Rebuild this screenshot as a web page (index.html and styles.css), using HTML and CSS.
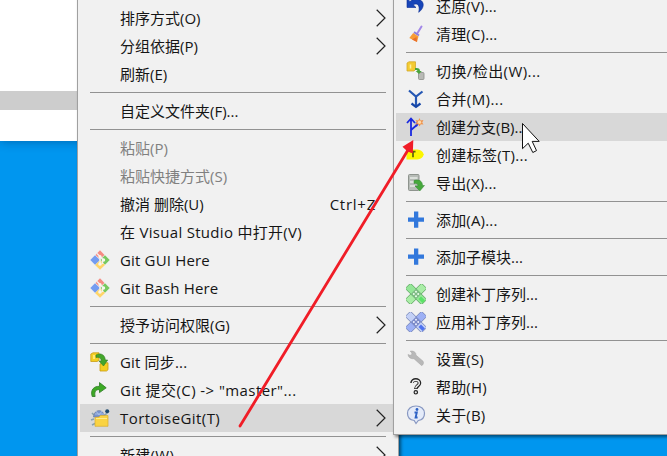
FILE: index.html
```html
<!DOCTYPE html>
<html lang="zh-CN">
<head>
<meta charset="utf-8">
<title>TortoiseGit</title>
<link rel="stylesheet" href="styles.css">
</head>
<body>
<main class="desktop">
  <div class="window"><div class="scrollbar"></div></div>

  <nav class="menu context">
    <div class="item more"><svg class="chev" viewBox="0 0 10 18"><path d="M.7.8 9 9 .7 17.2"/></svg></div>
    <div class="item more">排序方式(O)<svg class="chev" viewBox="0 0 10 18"><path d="M.7.8 9 9 .7 17.2"/></svg></div>
    <div class="item more">分组依据(P)<svg class="chev" viewBox="0 0 10 18"><path d="M.7.8 9 9 .7 17.2"/></svg></div>
    <div class="item">刷新(E)</div>
    <div class="sep"></div>
    <div class="item">自定义文件夹(F)...</div>
    <div class="sep"></div>
    <div class="item off">粘贴(P)</div>
    <div class="item off">粘贴快捷方式(S)</div>
    <div class="item">撤消 删除(U)<span class="key">Ctrl+Z</span></div>
    <div class="item loose">在 Visual Studio 中打开(V)</div>
    <div class="item slight">
      <svg class="icon" viewBox="0 0 20 20"><path fill="#f58b83" d="M10 .3 14.5 5 10 9 5.500 5z"/><path fill="#77c95f" d="M15 5.300 19.700 10 15 14.700 10 10z"/><path fill="#ffd568" d="M10 10 15 15 10 19.700 5 15z"/><path fill="#749cf0" d="M5 5.300 10 10 5 14.700.3 10z"/><path d="M7 3.500 12.500 9v5M10 7v7" fill="none" stroke="#f1f1ee" stroke-width="1.400"/><g fill="#f6f6ef"><circle cx="10" cy="6.700" r="1.600"/><circle cx="10" cy="14" r="1.800"/><circle cx="13.500" cy="10" r="1.700"/></g></svg>
      Git GUI Here</div>
    <div class="item slight">
      <svg class="icon" viewBox="0 0 20 20"><path fill="#f58b83" d="M10 .3 14.500 5 10 9 5.500 5z"/><path fill="#77c95f" d="M15 5.300 19.700 10 15 14.700 10 10z"/><path fill="#ffd568" d="M10 10 15 15 10 19.700 5 15z"/><path fill="#749cf0" d="M5 5.300 10 10 5 14.700.3 10z"/><path d="M7 3.500 12.500 9v5M10 7v7" fill="none" stroke="#f1f1ee" stroke-width="1.400"/><g fill="#f6f6ef"><circle cx="10" cy="6.700" r="1.600"/><circle cx="10" cy="14" r="1.800"/><circle cx="13.500" cy="10" r="1.700"/></g></svg>
      Git Bash Here</div>
    <div class="sep"></div>
    <div class="item more">授予访问权限(G)<svg class="chev" viewBox="0 0 10 18"><path d="M.7.8 9 9 .7 17.2"/></svg></div>
    <div class="sep"></div>
    <div class="item slight">
      <svg class="icon" viewBox="0 0 20 20"><g fill="#f3cf21" stroke="#c99d16" stroke-width=".8"><path d="M.8 2 3 .8h6v7.600L7 9.500H.8z"/><path d="M10 12l2-1.200h6v7L16.500 19H10z"/></g><path d="M3 3h2v4H3z" fill="#ffe875"/><path fill="#43a62b" stroke="#2f7b21" stroke-width=".6" d="M6 3c4.500-2.500 9-.5 9.300 5h2.400L13.500 14 9 9h2.300C11.200 6 9 4.700 6 5.500z"/></svg>
      Git 同步...</div>
    <div class="item wide">
      <svg class="icon" viewBox="0 0 20 20"><path fill="#3caa24" stroke="#36812d" stroke-width=".9" d="M2.200 16.500C.2 9.500 4 6.300 9.500 6.300V2.600l6.700 5.200L9.500 12.600V9.700c-3.500-.4-5.500 1.400-4.400 6.800z"/></svg>
      Git 提交(C) -&gt; "master"...</div>
    <div class="item more on wide">
      <svg class="icon" viewBox="0 0 20 20"><path d="M2 5l2 2M1 12l3-1M2 17l4-2M14 8l4-4" stroke="#88a2ae" stroke-width="1.600"/><path d="M3.500 9C4 .5 14 .5 14.500 9z" fill="#7893cf" stroke="#6b7d9e" stroke-width=".7"/><path d="M6 3l3 4 3-4M5 6h9" fill="none" stroke="#b3c6e8" stroke-width=".8"/><circle cx="17.200" cy="3.200" r="2" fill="#1d496f"/><path d="M5 9.500 9 9l1.500-1.500H18v10.800H5z" fill="#fad342" stroke="#d7ad2e" stroke-width=".7"/><path d="M6 10.500h11" stroke="#ffec8b"/></svg>
      TortoiseGit(T)<svg class="chev" viewBox="0 0 10 18"><path d="M.7.8 9 9 .7 17.2"/></svg></div>
    <div class="sep"></div>
    <div class="item more loose">新建(W)<svg class="chev" viewBox="0 0 10 18"><path d="M.7.8 9 9 .7 17.2"/></svg></div>
  </nav>

  <nav class="menu sub">
    <div class="item slight">
      <svg class="icon" viewBox="0 0 20 20"><path fill="#1745b8" stroke="#0b2d93" stroke-width=".6" d="M1 2.500v9h9L7.200 8.800c4-2.400 7.200.2 5.500 7.500 5.800-4 6-10.800.8-12.500C10 2.500 6.500 3.200 4 5.500z"/></svg>
      还原(V)...</div>
    <div class="item slight">
      <svg class="icon" viewBox="0 0 20 20"><path d="M15.500 2.500 11.500 9" stroke="#a287e8" stroke-width="2" stroke-linecap="round"/><path d="M8 8.200 13 11.500" stroke="#8f7fd9" stroke-width="2"/><path fill="#f79b35" d="M7.200 9 12.500 12.400 11 18 3.300 14z"/><path d="m11 18-5-2.600L10.500 13z" fill="#e96e2b"/></svg>
      清理(C)...</div>
    <div class="sep"></div>
    <div class="item wide">
      <svg class="icon" viewBox="0 0 20 20"><path d="M1 2 3 .8h6.500v7.700L8 10H1z" fill="#f4cb32" stroke="#d3a92c" stroke-width=".8"/><path d="M4.500 3.500v4" stroke="#fff0a0" stroke-width="1.500"/><rect x="12.500" y="11.500" width="5.500" height="7" rx="1" fill="#b9bab6" stroke="#8c8d89" stroke-width=".8"/><path d="M9 7c3.500-.5 5 .7 5 3h1.800L13 13l-3.300-3h1.600C11.500 9 10.500 8.800 9 9z" fill="#48a43c"/></svg>
      切换/检出(W)...</div>
    <div class="item wide">
      <svg class="icon" viewBox="0 0 20 20"><path d="M3 1.500 10 7.500l6.500-5M10 7.500v10" fill="none" stroke="#2457b4" stroke-width="2.200"/><path d="M5.500 14.500 10 17.800l4.500-3.300" fill="none" stroke="#1646a7" stroke-width="2.200"/></svg>
      合并(M)...</div>
    <div class="item on">
      <svg class="icon" viewBox="0 0 20 20"><path d="M5 19V2M1 6l4-4.500L9 6M5 13l7-6" fill="none" stroke="#1b2ae0" stroke-width="1.800"/><path d="M10.500 5.500v4" stroke="#1b2ae0" stroke-width="1.400"/><path d="m13.500 1 1.100 2.600L17.500 3l-1.300 2.500 1.300 2-2.700-.3-1.300 2.300-1.200-2.200-3 .2 1.500-2.100L9.500 3l2.800.6z" fill="#f0944c"/><circle cx="13.500" cy="5.200" r="1.700" fill="#ffd9a6"/></svg>
      创建分支(B)...</div>
    <div class="item loose">
      <svg class="icon" viewBox="0 0 20 20"><path d="M.5 4.500h10.800c3.500 0 5.700 2.300 6.500 5-.8 2.700-3 5-6.500 5H.5z" fill="#fcf600"/><path d="M4.500 6.700h5M7 6.700v5.600" stroke="#59610c" stroke-width="1.700"/></svg>
      创建标签(T)...</div>
    <div class="item slight">
      <svg class="icon" viewBox="0 0 20 20"><rect x="2.500" y="1.500" width="10.500" height="16" rx="1" fill="#b7bcb7" stroke="#8e948e"/><path d="M4 5h7.500M4 9h7M4 13h5" stroke="#e7eae7" stroke-width="1.400"/><path d="M8 7.500c5-1.500 8.500.5 8.500 5h2L13.800 18 9 13h3C12 11 10.500 10 8 10.500z" fill="#46a83c" stroke="#338632" stroke-width=".5"/></svg>
      导出(X)...</div>
    <div class="sep"></div>
    <div class="item slight">
      <svg class="icon" viewBox="0 0 20 20"><path d="M8 1.500h4.300v6H18v4.300h-5.700v6H8v-6H2V7.500h6z" fill="#3278dc"/></svg>
      添加(A)...</div>
    <div class="sep"></div>
    <div class="item">
      <svg class="icon" viewBox="0 0 20 20"><path d="M8 1.500h4.300v6H18v4.300h-5.700v6H8v-6H2V7.500h6z" fill="#3278dc"/></svg>
      添加子模块...</div>
    <div class="sep"></div>
    <div class="item">
      <svg class="icon" viewBox="0 0 20 20"><g stroke="#58a35c" stroke-width=".8"><rect x="-1.500" y="6.300" width="23" height="7.400" rx="1" transform="rotate(-45 10 10)" fill="#a9eda6"/><rect x="-1.500" y="6.300" width="23" height="7.400" rx="1" transform="rotate(45 10 10)" fill="#94e697"/></g><path d="M12.500 15l2.500-2.500 4 4-2.500 2.500z" fill="#59e366"/><path d="m10 4.800 5.200 5.200-5.200 5.200L4.800 10z" fill="#7eba85"/><g fill="#eaffea"><circle cx="10" cy="7.800" r="1"/><circle cx="7.800" cy="10" r="1"/><circle cx="12.200" cy="10" r="1"/><circle cx="10" cy="12.200" r="1"/></g></svg>
      创建补丁序列...</div>
    <div class="item">
      <svg class="icon" viewBox="0 0 20 20"><g stroke="#7080b4" stroke-width=".8"><rect x="-1.500" y="6.300" width="23" height="7.400" rx="1" transform="rotate(-45 10 10)" fill="#9db0f5"/><rect x="-1.500" y="6.300" width="23" height="7.400" rx="1" transform="rotate(45 10 10)" fill="#c3d0f6"/></g><path d="M12.500 15l2.500-2.500 4 4-2.500 2.500z" fill="#4f73ef"/><path d="m10 4.800 5.200 5.200-5.200 5.200L4.800 10z" fill="#7b8ac8"/><g fill="#edf0ff"><circle cx="10" cy="7.800" r="1"/><circle cx="7.800" cy="10" r="1"/><circle cx="12.200" cy="10" r="1"/><circle cx="10" cy="12.200" r="1"/></g></svg>
      应用补丁序列...</div>
    <div class="sep"></div>
    <div class="item slight">
      <svg class="icon" viewBox="0 0 20 20"><path d="M2 5.500c1.500 1 3 1 3.700 0 .6-1-.1-2.200-1.500-3.300C7.500 1.500 10.300 3.500 9.800 6l7.200 6.200c1 1.200.2 4.300-1.500 4.300L8 9.700C5 10.200 2.300 8.500 2 5.500z" fill="#b8b8b8" stroke="#a8a8a8" stroke-width=".6"/></svg>
      设置(S)</div>
    <div class="item slight">
      <svg class="icon" viewBox="0 0 20 20"><path d="M6 6C6 1.800 13.500 1.800 13.500 6c0 3-3.700 2.400-3.700 6" fill="none" stroke="#242424" stroke-width="3.600"/><path d="M6.400 6.300c0-4.200 6.900-4.200 6.900 0 0 2.600-3.500 2.300-3.500 5" fill="none" stroke="#eee" stroke-width="1.500"/><circle cx="9.800" cy="15.300" r="1.700" fill="#eee" stroke="#242424" stroke-width="1.200"/></svg>
      帮助(H)</div>
    <div class="item slight">
      <svg class="icon" viewBox="0 0 20 20"><path d="M10 1c5 0 8.500 3 8.500 7.300 0 4-2.500 6.700-6.200 7.200L10 18.500l-1.800-3C4.200 15 1.500 12.300 1.500 8.300 1.500 4 5 1 10 1z" fill="#e4ebf9" stroke="#8797c1" stroke-width="1.200"/><circle cx="11" cy="4.500" r="1.400" fill="#2d62c5"/><path d="M8.500 7.500h2.300l-1.200 5h2" fill="none" stroke="#2d62c5" stroke-width="1.900"/></svg>
      关于(B)</div>
  </nav>

  <svg class="overlay" viewBox="0 0 667 456">
    <path d="M240 426 408 150" stroke="#f01d27" stroke-width="2.800" stroke-linecap="round"/>
    <path d="M413.300 140 412.800 153.200 407.500 151.500 402.500 146.700z" fill="#f01d27"/>
    <path d="M522.500 123.500v25.200l5.700-5.500 4.600 9.300 3.700-1.900-4.300-9.200h7z" fill="#fff" stroke="#111" stroke-width="1"/>
  </svg>
</main>
</body>
</html>
```
FILE: styles.css
```css
* { box-sizing: border-box; }

body {
  margin: 0;
  overflow: hidden;
}

.desktop {
  position: relative;
  width: 667px;
  height: 456px;
  overflow: hidden;
  background: #0096ef;
  color: #151515;
  font: 15px/28px "Open Sans", "Noto Sans CJK SC", sans-serif;
}

.window {
  height: 141px;
  padding-top: 91px;
  background: #fff;
  box-shadow: 0 0 10px rgba(0, 40, 90, .45);
}

.scrollbar {
  height: 19px;
  background: #cdcdcd;
}

.menu {
  position: absolute;
  background: #f1f1f1;
  border: 1px solid #a0a0a0;
  box-shadow: 2px 2px 3px rgba(0, 0, 0, .5);
}

.context {
  left: 77px;
  top: -27px;
  width: 322px;
  height: 500px;
  padding: 2px;
}

.sub {
  left: 393px;
  top: -12px;
  width: 300px;
  height: 447px;
  padding: 3px 2px;
}

.item {
  display: flex;
  align-items: center;
  height: 28px;
  padding-left: 40px;
  white-space: nowrap;
}

.on { background: #d8d8d8; }
.off { color: #808080; }

.slight { letter-spacing: .17px; }
.loose { letter-spacing: .3px; }
.wide { letter-spacing: .42px; }

.icon {
  width: 20px;
  height: 20px;
  margin: 0 10px 0 -30px;
}

.chev {
  width: 10px;
  height: 18px;
  margin: 0 10px 0 auto;
  fill: none;
  stroke: #222;
  stroke-width: 1.2;
}

.key {
  margin: 0 20px 0 auto;
  letter-spacing: .75px;
}

.sep {
  height: 9px;
  padding: 4px 10px;
}

.sep::before {
  content: "";
  display: block;
  height: 1px;
  background: #929292;
}

.overlay {
  position: absolute;
  inset: 0;
  width: 667px;
  height: 456px;
  fill: none;
}
```
